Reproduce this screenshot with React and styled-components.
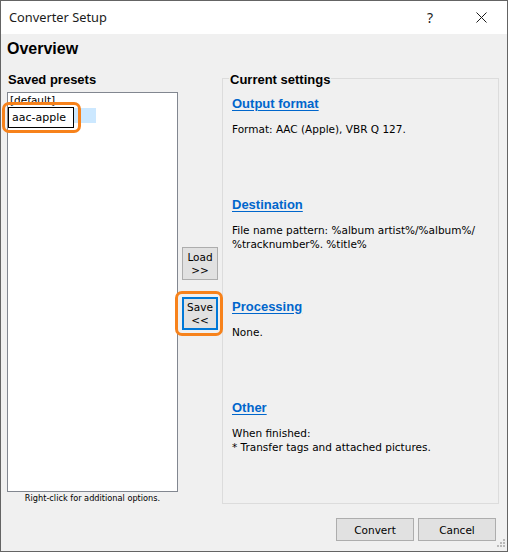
import React from "react";
import styled, { createGlobalStyle } from "styled-components";

const Global = createGlobalStyle`
  html, body { margin: 0; padding: 0; background: #ffffff; }
  #root { width: 508px; height: 552px; }
  *, *::before, *::after { box-sizing: border-box; }
`;

const Window = styled.div`
  position: relative;
  width: 508px;
  height: 552px;
  border: 1px solid #646464;
  display: flex;
  flex-direction: column;
  background: #f0f0f0;
  overflow: hidden;
  font-family: "DejaVu Sans", Tahoma, sans-serif;
  font-size: 10.5px;
  color: #000;
`;

const TitleBar = styled.div`
  flex: none;
  height: 33px;
  background: #ffffff;
  display: flex;
  align-items: center;
  padding-left: 8px;
`;

const Title = styled.div`
  flex: 1;
  font-family: "Noto Sans", "Segoe UI", sans-serif;
  font-size: 12.8px;
  line-height: 18px;
  color: #1b1b1b;
  padding-bottom: 1px;
`;

const CaptionButton = styled.div`
  width: ${(p) => p.$w}px;
  height: 33px;
  display: flex;
  align-items: center;
  justify-content: center;
  font-family: "Noto Sans", "Segoe UI", sans-serif;
  font-size: 14px;
  color: #1b1b1b;
`;

const Body = styled.div`
  flex: 1;
  display: flex;
  flex-direction: column;
  padding: 0 8px 0 6px;
`;

const PageHeading = styled.div`
  height: 38px;
  padding-top: 5px;
  font-family: "Liberation Sans", Arial, sans-serif;
  font-weight: bold;
  font-size: 16px;
  line-height: 19px;
`;

const Main = styled.div`
  height: 432px;
  display: flex;
`;

const LeftColumn = styled.div`
  width: 171px;
  display: flex;
  flex-direction: column;
`;

const SubHeading = styled.div`
  height: 20px;
  padding-left: 1px;
  font-family: "Liberation Sans", Arial, sans-serif;
  font-weight: bold;
  font-size: 13px;
  line-height: 16px;
`;

const ListBox = styled.div`
  height: 400px;
  border: 1px solid #828790;
  background: #ffffff;
  display: flex;
  flex-direction: column;
`;

const ListRow = styled.div`
  position: relative;
  height: 15px;
  line-height: 15px;
  padding-left: 2px;
  width: ${(p) => (p.$selected ? "88px" : "auto")};
  background: ${(p) => (p.$selected ? "#cce8ff" : "transparent")};
`;

const InlineEditor = styled.div`
  position: absolute;
  left: 0;
  top: -1px;
  width: 66px;
  height: 21px;
  border: 1px solid #000;
  background: #fff;
  padding-left: 3px;
  font-size: 11px;
  line-height: 19px;
`;

const Highlight = styled.div`
  position: absolute;
  left: ${(p) => p.$l}px;
  right: ${(p) => p.$r}px;
  top: ${(p) => p.$t}px;
  bottom: ${(p) => p.$b}px;
  border: 3px solid #f7821b;
  border-radius: 7px;
  pointer-events: none;
`;

const Caption = styled.div`
  height: 12px;
  text-align: center;
  font-size: 8.2px;
  line-height: 13px;
`;

const MiddleColumn = styled.div`
  width: 44px;
  display: flex;
  flex-direction: column;
  align-items: center;
  gap: 17px;
  padding-top: 175px;
`;

const SideButton = styled.div`
  position: relative;
  width: 36px;
  height: 33px;
  background: #e1e1e1;
  border: 1px solid ${(p) => (p.$focused ? "#0078d7" : "#adadad")};
  box-shadow: ${(p) => (p.$focused ? "inset 0 0 0 1px #0078d7" : "none")};
  display: flex;
  flex-direction: column;
  align-items: center;
  justify-content: center;
  line-height: 13px;
  font-size: 10.5px;
`;

const Group = styled.div`
  flex: 1;
  margin-top: 6px;
  height: 426px;
  border: 1px solid #dcdcdc;
  display: flex;
  flex-direction: column;
  align-items: flex-start;
  padding: 0 8px 0 9px;
`;

const GroupTitle = styled.div`
  margin: -7px 0 0 -3px;
  padding: 0 1px;
  background: #f0f0f0;
  font-family: "Liberation Sans", Arial, sans-serif;
  font-weight: bold;
  font-size: 13px;
  line-height: 16px;
`;

const Sections = styled.div`
  padding-top: 7.5px;
  display: flex;
  flex-direction: column;
`;

const Section = styled.div`
  height: 101.5px;
`;

const SectionLink = styled.a`
  display: block;
  color: #0066cc;
  font-family: "Liberation Sans", Arial, sans-serif;
  font-weight: bold;
  font-size: 13px;
  line-height: 16px;
  text-decoration: underline;
  text-underline-offset: 2px;
  cursor: pointer;
`;

const SectionText = styled.div`
  margin-top: 10px;
  line-height: 14px;
  white-space: pre-line;
`;

const Footer = styled.div`
  display: flex;
  justify-content: flex-end;
  gap: 4px;
  padding: 14px 3px 0 0;
`;

const DialogButton = styled.div`
  width: 78px;
  height: 23px;
  background: #e1e1e1;
  border: 1px solid #adadad;
  display: flex;
  align-items: center;
  justify-content: center;
  font-size: 10.5px;
`;

const Grip = styled.svg`
  position: absolute;
  right: 1px;
  bottom: 1px;
`;

const sections = [
  { title: "Output format", text: "Format: AAC (Apple), VBR Q 127." },
  { title: "Destination", text: "File name pattern: %album artist%/%album%/\n%tracknumber%. %title%" },
  { title: "Processing", text: "None." },
  { title: "Other", text: "When finished:\n* Transfer tags and attached pictures." },
];

export default function App() {
  return (
    <>
      <Global />
      <Window>
        <TitleBar>
          <Title>Converter Setup</Title>
          <CaptionButton $w={50}>?</CaptionButton>
          <CaptionButton $w={52}>
            <svg width="11" height="11" viewBox="0 0 11 11">
              <path d="M0.5 0.5 L10.5 10.5 M10.5 0.5 L0.5 10.5" stroke="#1b1b1b" strokeWidth="1" />
            </svg>
          </CaptionButton>
        </TitleBar>
        <Body>
          <PageHeading>Overview</PageHeading>
          <Main>
            <LeftColumn>
              <SubHeading>Saved presets</SubHeading>
              <ListBox>
                <ListRow>[default]</ListRow>
                <ListRow $selected>
                  <InlineEditor>aac-apple</InlineEditor>
                  <Highlight $l={-6} $r={15} $t={-6} $b={-10} />
                </ListRow>
              </ListBox>
              <Caption>Right-click for additional options.</Caption>
            </LeftColumn>
            <MiddleColumn>
              <SideButton>
                <span>Load</span>
                <span>&gt;&gt;</span>
              </SideButton>
              <SideButton $focused>
                <span>Save</span>
                <span>&lt;&lt;</span>
                <Highlight $l={-8} $r={-6} $t={-7} $b={-7} />
              </SideButton>
            </MiddleColumn>
            <Group>
              <GroupTitle>Current settings</GroupTitle>
              <Sections>
                {sections.map((s) => (
                  <Section key={s.title}>
                    <SectionLink>{s.title}</SectionLink>
                    <SectionText>{s.text}</SectionText>
                  </Section>
                ))}
              </Sections>
            </Group>
          </Main>
          <Footer>
            <DialogButton>Convert</DialogButton>
            <DialogButton>Cancel</DialogButton>
          </Footer>
        </Body>
        <Grip width="12" height="12" viewBox="0 0 12 12">
          <g fill="#b9b9b9">
            <rect x="9" y="1" width="2" height="2" />
            <rect x="6" y="4" width="2" height="2" />
            <rect x="9" y="4" width="2" height="2" />
            <rect x="3" y="7" width="2" height="2" />
            <rect x="6" y="7" width="2" height="2" />
            <rect x="9" y="7" width="2" height="2" />
          </g>
        </Grip>
      </Window>
    </>
  );
}
